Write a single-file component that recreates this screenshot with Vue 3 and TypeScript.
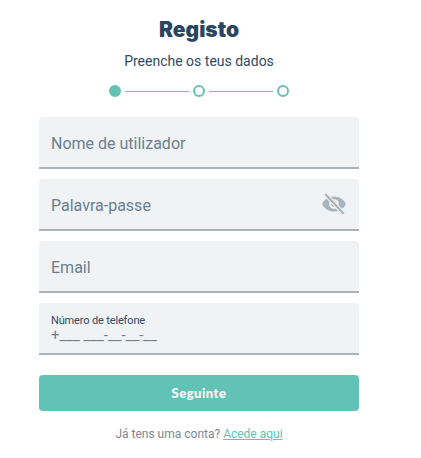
<script setup lang="ts">
const fields = [
  { key: 'user', label: 'Nome de utilizador', icon: false },
  { key: 'pass', label: 'Palavra-passe', icon: true },
  { key: 'email', label: 'Email', icon: false },
];
</script>

<template>
  <main class="page">
    <h1 class="title">Registo</h1>
    <p class="subtitle">Preenche os teus dados</p>

    <div class="steps">
      <span class="dot dot-active"></span>
      <span class="line"></span>
      <span class="dot"></span>
      <span class="line"></span>
      <span class="dot"></span>
    </div>

    <form class="form" @submit.prevent>
      <div v-for="f in fields" :key="f.key" class="field">
        <span class="field-label">{{ f.label }}</span>
        <svg v-if="f.icon" class="eye" viewBox="0 0 24 24">
          <path
            fill="#a9b3bc"
            d="M12 5C7 5 2.700 8.100 1 12c1.700 3.900 6 7 11 7s9.300-3.100 11-7c-1.700-3.900-6-7-11-7zm0 11.500a4.500 4.500 0 1 1 0-9 4.500 4.500 0 0 1 0 9z"
          />
          <circle cx="12" cy="12" r="2.600" fill="#a9b3bc" />
          <path d="M4 3l17 18" stroke="#f0f2f4" stroke-width="4" />
          <path d="M4 3l17 18" stroke="#a9b3bc" stroke-width="2" />
        </svg>
      </div>

      <div class="field field-phone">
        <span class="phone-label">Número de telefone</span>
        <span class="phone-mask">+___ ___-__-__-__</span>
      </div>

      <button class="next" type="submit">Seguinte</button>
    </form>

    <p class="login">Já tens uma conta? <a class="login-link" href="#">Acede aqui</a></p>
  </main>
</template>

<style scoped>
.page {
  width: 320px;
  margin-left: 39px;
  display: flex;
  flex-direction: column;
  align-items: center;
  font-family: Roboto, "Liberation Sans", sans-serif;
}

.title {
  margin: 17px 0 0;
  font-family: Inter, "Liberation Sans", sans-serif;
  font-size: 21px;
  line-height: 26px;
  font-weight: 900;
  color: #2a4560;
}

.subtitle {
  margin: 9px 0 0;
  font-size: 14px;
  line-height: 18px;
  color: #2f4a63;
}

.steps {
  margin-top: 15px;
  display: flex;
  align-items: center;
  gap: 4px;
}

.dot {
  width: 12px;
  height: 12px;
  box-sizing: border-box;
  border: 2px solid #62c2b5;
  border-radius: 50%;
}

.dot-active {
  background: #62c2b5;
}

.line {
  width: 64px;
  height: 1px;
  background: #62c2b5;
}

.form {
  width: 100%;
  margin-top: 20px;
  display: flex;
  flex-direction: column;
  gap: 10px;
}

.field {
  height: 52px;
  box-sizing: border-box;
  padding: 3px 12px 0;
  display: flex;
  align-items: center;
  justify-content: space-between;
  background: #f0f2f4;
  border-bottom: 2px solid #a9b3bc;
  border-radius: 4px 4px 0 0;
}

.field-label {
  font-size: 16px;
  color: #6b7f90;
}

.eye {
  width: 26px;
  height: 26px;
  margin-top: -3px;
}

.field-phone {
  padding-top: 0;
  flex-direction: column;
  align-items: flex-start;
  justify-content: center;
}

.phone-label {
  font-size: 11px;
  line-height: 15px;
  letter-spacing: -0.15px;
  color: #2f4a63;
}

.phone-mask {
  font-size: 15px;
  line-height: 15px;
  color: #6b7f90;
}

.next {
  height: 36px;
  margin-top: 10px;
  border: none;
  border-radius: 4px;
  background: #62c2b5;
  color: #fff;
  font-family: Lato, "Liberation Sans", sans-serif;
  font-size: 13px;
  font-weight: 900;
  letter-spacing: 0.5px;
}

.login {
  margin: 15px 0 0;
  font-size: 12px;
  line-height: 16px;
  color: #7b8794;
}

.login-link {
  color: #62c2b5;
  text-decoration: underline;
}
</style>
